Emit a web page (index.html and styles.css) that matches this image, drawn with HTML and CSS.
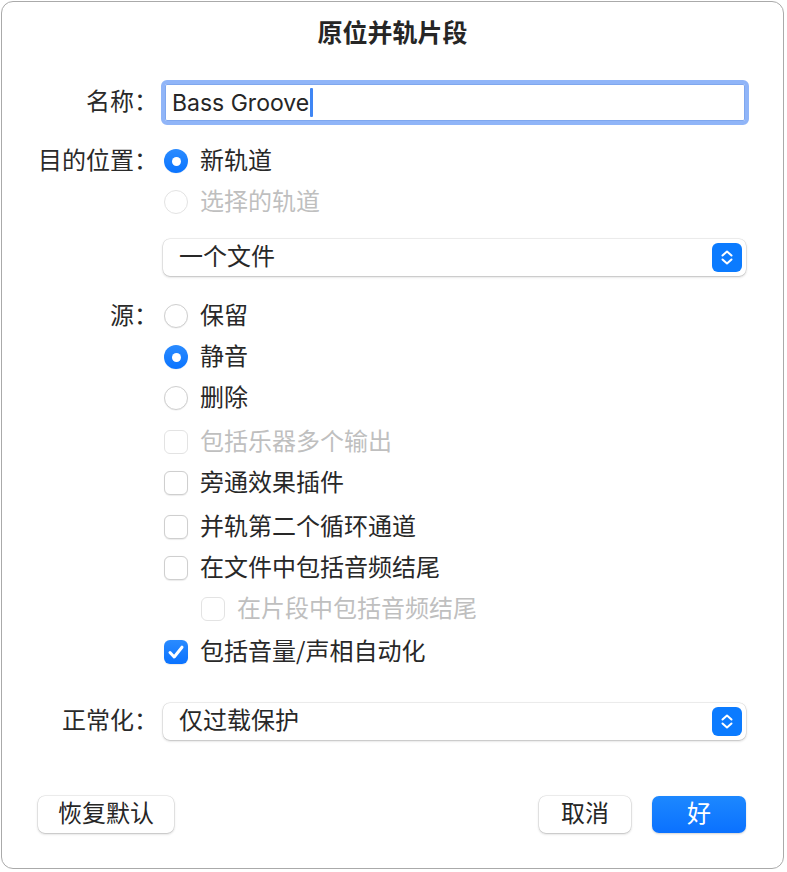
FILE: index.html
```html
<!DOCTYPE html>
<html lang="zh-CN">
<head>
<meta charset="utf-8">
<title>原位并轨片段</title>
<link rel="stylesheet" href="styles.css">
</head>
<body>
<div class="win">
  <div class="title">原位并轨片段</div>

  <div class="row r-name">
    <div class="lbl"><span class="tx">名称：</span></div>
    <div class="field"><span class="val">Bass Groove</span><span class="caret"></span></div>
  </div>

  <div class="row opt-row r-new">
    <div class="lbl"><span class="tx">目的位置：</span></div>
    <div class="opt"><span class="radio on"></span><span class="tx">新轨道</span></div>
  </div>
  <div class="row opt-row">
    <div class="lbl"></div>
    <div class="opt dis"><span class="radio"></span><span class="tx">选择的轨道</span></div>
  </div>

  <div class="row r-pop1">
    <div class="lbl"></div>
    <div class="popup"><span class="tx">一个文件</span>
      <svg class="step" width="30" height="29" viewBox="0 0 30 29"><rect x="0" y="0" width="30" height="29" rx="6" fill="#0b7bff"/><path d="M10.5 12.5 L15 8.5 L19.5 12.5" fill="none" stroke="#fff" stroke-width="2" stroke-linecap="round" stroke-linejoin="round"/><path d="M10.5 16.5 L15 20.5 L19.5 16.5" fill="none" stroke="#fff" stroke-width="2" stroke-linecap="round" stroke-linejoin="round"/></svg>
    </div>
  </div>

  <div class="row opt-row r-src">
    <div class="lbl"><span class="tx">源：</span></div>
    <div class="opt"><span class="radio"></span><span class="tx">保留</span></div>
  </div>
  <div class="row opt-row">
    <div class="lbl"></div>
    <div class="opt"><span class="radio on"></span><span class="tx">静音</span></div>
  </div>
  <div class="row opt-row">
    <div class="lbl"></div>
    <div class="opt"><span class="radio"></span><span class="tx">删除</span></div>
  </div>

  <div class="row opt-row gap3">
    <div class="lbl"></div>
    <div class="opt dis"><span class="check"></span><span class="tx">包括乐器多个输出</span></div>
  </div>
  <div class="row opt-row">
    <div class="lbl"></div>
    <div class="opt"><span class="check"></span><span class="tx">旁通效果插件</span></div>
  </div>
  <div class="row opt-row gap3">
    <div class="lbl"></div>
    <div class="opt"><span class="check"></span><span class="tx">并轨第二个循环通道</span></div>
  </div>
  <div class="row opt-row">
    <div class="lbl"></div>
    <div class="opt"><span class="check"></span><span class="tx">在文件中包括音频结尾</span></div>
  </div>
  <div class="row opt-row">
    <div class="lbl"></div>
    <div class="opt dis indent"><span class="check"></span><span class="tx">在片段中包括音频结尾</span></div>
  </div>
  <div class="row opt-row gap2">
    <div class="lbl"></div>
    <div class="opt"><span class="check on"><svg width="24" height="24" viewBox="0 0 24 24"><path d="M6 12.5 L10.2 17 L18 7.2" fill="none" stroke="#fff" stroke-width="3" stroke-linecap="round" stroke-linejoin="round"/></svg></span><span class="tx">包括音量/声相自动化</span></div>
  </div>

  <div class="row r-pop2">
    <div class="lbl"><span class="tx">正常化：</span></div>
    <div class="popup"><span class="tx">仅过载保护</span>
      <svg class="step" width="30" height="29" viewBox="0 0 30 29"><rect x="0" y="0" width="30" height="29" rx="6" fill="#0b7bff"/><path d="M10.5 12.5 L15 8.5 L19.5 12.5" fill="none" stroke="#fff" stroke-width="2" stroke-linecap="round" stroke-linejoin="round"/><path d="M10.5 16.5 L15 20.5 L19.5 16.5" fill="none" stroke="#fff" stroke-width="2" stroke-linecap="round" stroke-linejoin="round"/></svg>
    </div>
  </div>

  <div class="buttons">
    <div class="btn btn-reset"><span class="tx">恢复默认</span></div>
    <div class="spacer"></div>
    <div class="btn btn-cancel"><span class="tx">取消</span></div>
    <div class="btn btn-ok"><span class="tx">好</span></div>
  </div>
</div>
</body>
</html>
```

FILE: styles.css
```css
html, body {
  margin: 0;
  padding: 0;
  background: #ffffff;
}

body {
  font-family: "Inter", "Noto Sans CJK SC", sans-serif;
  font-size: 24px;
  color: #282828;
}

.tx {
  display: inline-block;
  line-height: 1.2;
  padding-bottom: 4px;
  font-family: "Noto Sans CJK SC", sans-serif;
}

.win {
  box-sizing: border-box;
  margin: 1px 0 0 1px;
  width: 783px;
  height: 868px;
  border: 1px solid #aaaaaa;
  border-radius: 12px;
  background: #ffffff;
  display: flex;
  flex-direction: column;
}

.title {
  height: 60px;
  line-height: 58px;
  text-align: center;
  font-weight: 700;
  font-size: 25px;
  color: #262626;
  font-family: "Noto Sans CJK SC", sans-serif;
}

.row {
  display: flex;
  align-items: center;
}

.lbl {
  width: 156px;
  flex: none;
  text-align: right;
  color: #2a2a2a;
}

.r-name {
  margin-top: 18px;
  height: 45px;
}

.field {
  box-sizing: border-box;
  margin-left: 3px;
  width: 588px;
  height: 45px;
  border: 4px solid #90b5f8;
  border-radius: 6px;
  background: #ffffff;
  display: flex;
  align-items: center;
  padding-left: 7px;
  box-shadow: inset 0 0 0 1px #7fa7ee;
}

.val {
  font-family: "Inter", sans-serif;
  font-size: 23px;
  color: #262626;
}

.caret {
  display: inline-block;
  width: 3px;
  height: 29px;
  margin-left: 1px;
  background: #3f86f4;
  border-radius: 1px;
}

.opt-row {
  height: 41px;
}

.r-new { margin-top: 16px; }
.r-src { margin-top: 20px; }
.gap3 { margin-top: 3px; }
.gap2 { margin-top: 2px; }

.opt {
  display: flex;
  align-items: center;
  margin-left: 6px;
  gap: 12px;
}

.opt.indent {
  margin-left: 43px;
}

.opt.dis {
  color: #bfbfbf;
}

.radio {
  box-sizing: border-box;
  width: 24px;
  height: 24px;
  border-radius: 50%;
  border: 1px solid #cfcfcf;
  background: #ffffff;
  box-shadow: 0 0.5px 1px rgba(0, 0, 0, 0.08);
  flex: none;
  display: flex;
  align-items: center;
  justify-content: center;
}

.radio.on {
  border: none;
  background: linear-gradient(#2a8bff, #0a74ff);
}

.radio.on::after {
  content: "";
  width: 9px;
  height: 9px;
  border-radius: 50%;
  background: #ffffff;
}

.dis .radio,
.dis .check {
  border-color: #e3e3e3;
  box-shadow: none;
}

.check {
  box-sizing: border-box;
  width: 24px;
  height: 24px;
  border-radius: 6px;
  border: 1px solid #cfcfcf;
  background: #ffffff;
  box-shadow: 0 0.5px 1px rgba(0, 0, 0, 0.08);
  flex: none;
  display: flex;
}

.check.on {
  border: none;
  background: linear-gradient(#2a8bff, #0a72ff);
}

.r-pop1 {
  margin-top: 16px;
  height: 37px;
}

.r-pop2 {
  margin-top: 30px;
  height: 37px;
}

.popup {
  box-sizing: border-box;
  margin-left: 5px;
  width: 583px;
  height: 37px;
  border-radius: 7px;
  background: #ffffff;
  box-shadow: 0 0 0 0.5px rgba(0, 0, 0, 0.12), 0 1px 2.5px rgba(0, 0, 0, 0.22);
  display: flex;
  align-items: center;
  justify-content: space-between;
  padding-left: 16px;
  padding-right: 4px;
}

.step {
  display: block;
  flex: none;
}

.buttons {
  margin-top: 56px;
  display: flex;
  align-items: center;
  padding: 0 37px 0 36px;
}

.spacer {
  flex: 1;
}

.btn {
  box-sizing: border-box;
  height: 37px;
  border-radius: 7px;
  background: #ffffff;
  box-shadow: 0 0 0 0.5px rgba(0, 0, 0, 0.12), 0 1px 2.5px rgba(0, 0, 0, 0.22);
  display: flex;
  align-items: center;
  justify-content: center;
  color: #262626;
}

.btn-reset {
  width: 136px;
}

.btn-cancel {
  width: 92px;
}

.btn-ok {
  width: 94px;
  margin-left: 21px;
  color: #ffffff;
  background: linear-gradient(#1d88ff, #0a71ff);
  box-shadow: 0 1px 2px rgba(0, 0, 0, 0.18);
}
```
